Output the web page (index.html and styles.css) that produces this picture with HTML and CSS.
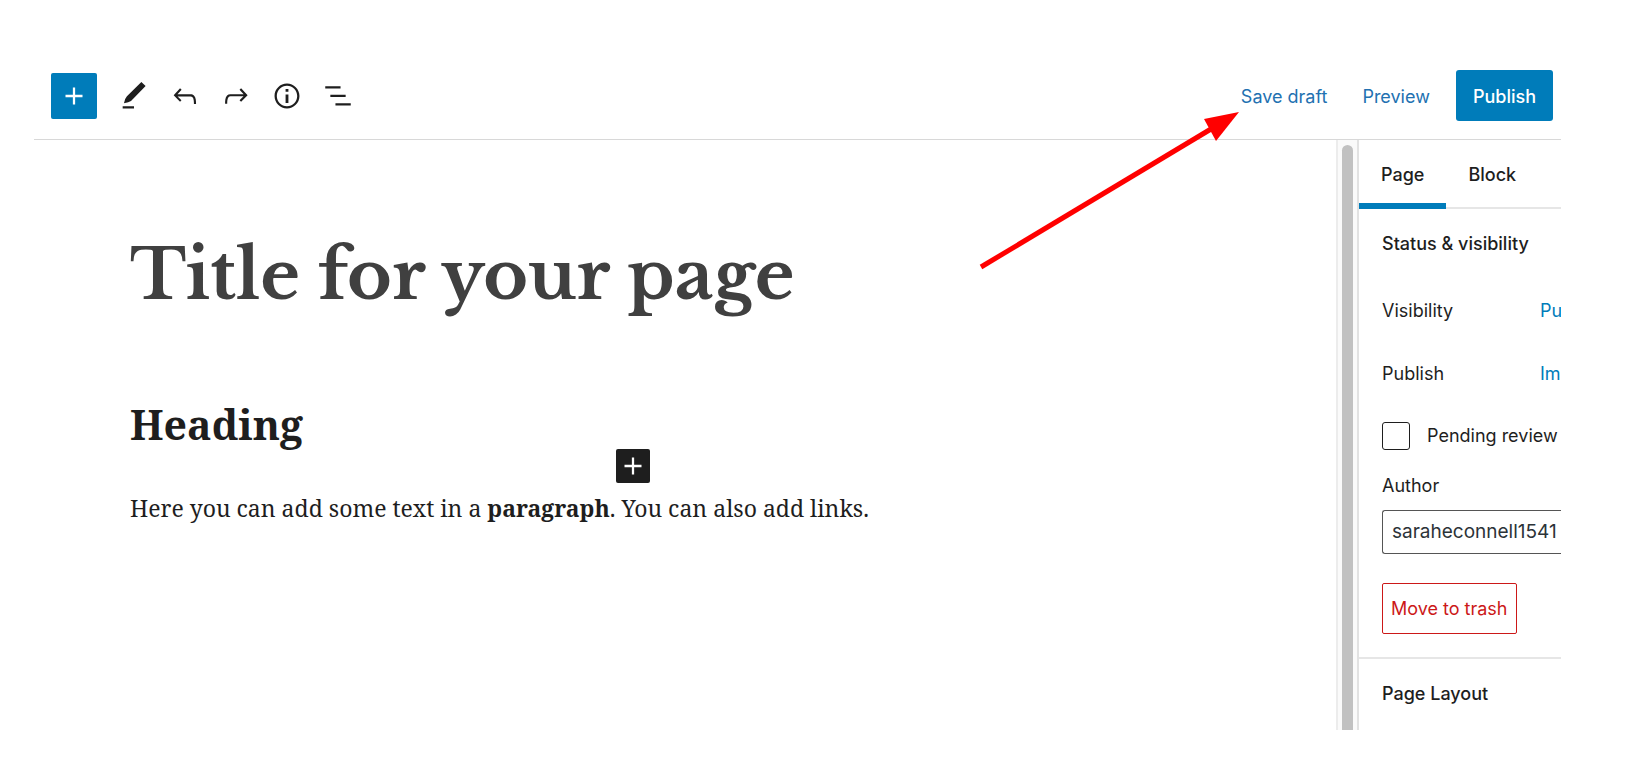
FILE: index.html
```html
<!DOCTYPE html>
<html lang="en">
<head>
<meta charset="utf-8">
<title>Edit Page</title>
<link rel="stylesheet" href="styles.css">
</head>
<body>
<div class="editor">
  <header class="header">
    <div class="tools">
      <button class="add" type="button" aria-label="Add block"><svg class="icon" viewBox="0 0 24 24"><path d="M18 11.2h-5.2V6h-1.6v5.2H6v1.6h5.2V18h1.6v-5.2H18z"/></svg></button>
      <button class="tool" type="button" aria-label="Edit"><svg class="icon" viewBox="0 0 24 24"><path d="M20.2 5L17.2 2.2 7 12.2Q5.4 14 4.9 17.1 8.4 16.6 9.9 15.5zM4 20.8h8v-1.5H4z"/></svg></button>
      <button class="tool" type="button" aria-label="Undo"><svg class="icon" viewBox="0 0 24 24"><path d="M18.3 11.7c-.6-.6-1.4-.9-2.3-.9H6.7l2.9-3.3-1.1-1-4.5 5L8.5 16l1-1-2.7-2.7H16c.5 0 .9.2 1.3.5 1 1 1 3.4 1 4.5v.3h1.5v-.2c0-1.5 0-4.3-1.5-5.7z"/></svg></button>
      <button class="tool" type="button" aria-label="Redo"><svg class="icon" viewBox="0 0 24 24"><path d="M15.6 6.5l-1.1 1 2.9 3.3H8c-.9 0-1.7.3-2.3.9-1.4 1.5-1.4 4.2-1.4 5.6v.2h1.5v-.3c0-1.1 0-3.5 1-4.5.3-.3.7-.5 1.3-.5h9.2L14.5 15l1.1 1.1 4.6-4.6-4.6-5z"/></svg></button>
      <button class="tool" type="button" aria-label="Details"><svg class="icon" viewBox="0 0 24 24"><path d="M12 3.2c-4.8 0-8.8 3.9-8.8 8.8 0 4.8 3.9 8.8 8.8 8.8 4.8 0 8.8-3.9 8.8-8.8 0-4.8-4-8.8-8.8-8.8zm0 16c-4 0-7.2-3.3-7.2-7.2C4.8 8 8 4.8 12 4.8s7.2 3.3 7.2 7.2c0 4-3.2 7.2-7.2 7.2zM11 17h2v-6h-2v6zm0-8h2V7h-2v2z"/></svg></button>
      <button class="tool" type="button" aria-label="List view"><svg class="icon" viewBox="0 0 24 24"><path d="M13.8 5.2H3v1.5h10.8V5.2zm-3.6 12v1.5H21v-1.5H10.2zm7.2-6H6.6v1.5h10.8v-1.5z"/></svg></button>
    </div>
    <div class="actions">
      <button class="link" type="button">Save draft</button>
      <button class="link" type="button">Preview</button>
      <button class="publish" type="button">Publish</button>
    </div>
  </header>
  <div class="body">
    <main class="canvas">
      <div class="content">
        <h1 class="title">Title for your page</h1>
        <h2 class="heading">Heading</h2>
        <div class="block">
          <button class="inserter" type="button" aria-label="Insert block"><svg class="icon" viewBox="0 0 24 24"><path d="M18 11.2h-5.2V6h-1.6v5.2H6v1.6h5.2V18h1.6v-5.2H18z"/></svg></button>
          <p class="paragraph">Here you can add some text in a <strong>paragraph</strong>. You can also add links.</p>
        </div>
      </div>
    </main>
    <div class="track"><div class="thumb"></div></div>
    <aside class="sidebar">
      <div class="tabs">
        <button class="tab tab-active" type="button">Page</button>
        <button class="tab" type="button">Block</button>
      </div>
      <section class="panel">
        <h3 class="panel-title">Status &amp; visibility</h3>
        <div class="row row-first"><span class="row-label">Visibility</span><a class="row-link" href="#">Pu</a></div>
        <div class="row"><span class="row-label">Publish</span><a class="row-link" href="#">Im</a></div>
        <div class="check-row"><input class="check" type="checkbox" id="pending"><label for="pending">Pending review</label></div>
        <label class="author-label" for="author">Author</label>
        <select class="author" id="author"><option>saraheconnell1541</option></select>
        <button class="trash" type="button">Move to trash</button>
      </section>
      <section class="panel panel-next">
        <h3 class="panel-title">Page Layout</h3>
      </section>
    </aside>
  </div>
  <svg class="arrow" viewBox="0 0 270 170" aria-hidden="true"><path d="M6 162L236 24" stroke="#f00" stroke-width="5"/><path d="M264 7L229 14 241 36z" fill="#f00"/></svg>
</div>
</body>
</html>
```
FILE: styles.css
```css
* { box-sizing: border-box; }
body { margin: 0; background: #fff; color: #1e1e1e; font: 18px/24px Inter, "Liberation Sans", sans-serif; }
button, select { font: inherit; color: inherit; margin: 0; padding: 0; border: 0; background: none; }
h1, h2, h3, p { margin: 0; }

.editor { position: relative; display: flex; flex-direction: column; min-height: calc(100vh - 46px); margin: 0 81px 46px 34px; }
.header { display: flex; justify-content: space-between; align-items: center; padding: 70px 8px 18px 17px; border-bottom: 1px solid #d8d8d8; }
.tools { display: flex; align-items: center; gap: 17px; }
.add { display: flex; align-items: center; justify-content: center; width: 46px; height: 46px; margin-right: 3px; border-radius: 2px; background: #007cba; color: #fff; }
.tool { display: flex; }
.icon { width: 34px; height: 34px; fill: currentColor; }
.actions { display: flex; align-items: center; }
.link { margin-right: 35px; padding-top: 2px; color: #2271b1; }
.link:nth-child(2) { margin-right: 26px; }
.publish { height: 51px; padding: 2px 17px 0; border-radius: 3px; background: #007cba; color: #fff; font-weight: 500; }

.body { display: flex; flex: 1; }
.canvas { flex: 1; min-width: 0; padding: 91px 0 0 96px; }
.content { max-width: 1006px; }
.title { color: #404040; font: bold 68px/88px "Libre Baskerville", "Liberation Serif", serif; }
.heading { margin-top: 77px; font: bold 41px/56px "Noto Serif", "DejaVu Serif Condensed", "DejaVu Serif", serif; }
.block { position: relative; margin-top: 36px; }
.paragraph { font: 23px/40px "Noto Serif", "DejaVu Serif Condensed", "DejaVu Serif", serif; }
.inserter { position: absolute; left: 50%; bottom: 45px; display: flex; width: 34px; height: 34px; margin-left: -17px; border-radius: 2px; background: #1e1e1e; color: #fff; }

.track { display: flex; width: 23px; padding: 5px 4px 0; border-left: 2px solid #ececec; border-right: 2px solid #e2e2e2; background: #fafafa; }
.thumb { flex: 1; border-radius: 6px 6px 0 0; background: #c1c1c1; }

.sidebar { width: 202px; overflow: hidden; }
.tabs { display: flex; height: 69px; border-bottom: 2px solid #e6e6e6; }
.tab { height: 69px; padding: 7px 22px 0; border-bottom: 6px solid transparent; font-weight: 500; }
.tab-active { border-bottom-color: #007cba; }
.panel { display: flex; flex-direction: column; align-items: flex-start; padding: 23px 0 23px 23px; }
.panel-next { border-top: 2px solid #e6e6e6; }
.panel-title { font-size: 18px; line-height: 24px; font-weight: 500; white-space: nowrap; }
.row { display: flex; margin-top: 39px; }
.row-first { margin-top: 43px; }
.row-label { width: 158px; }
.row-link { color: #007cba; text-decoration: none; }
.check-row { display: flex; align-items: center; gap: 17px; margin-top: 36px; white-space: nowrap; }
.check { appearance: none; width: 28px; height: 28px; margin: 0; border: 1px solid #1e1e1e; border-radius: 3px; }
.author-label { margin-top: 24px; }
.author { align-self: stretch; appearance: none; height: 44px; margin-top: 12px; padding-left: 9px; border: 1px solid #555; border-right: 0; border-radius: 3px 0 0 3px; color: #2c3338; font-size: 19px; }
.trash { height: 51px; margin-top: 29px; padding: 0 8px; border: 1px solid #cc1818; border-radius: 2px; color: #cc1818; white-space: nowrap; }

.arrow { position: absolute; top: 105px; right: 316px; width: 270px; height: 170px; }
```
